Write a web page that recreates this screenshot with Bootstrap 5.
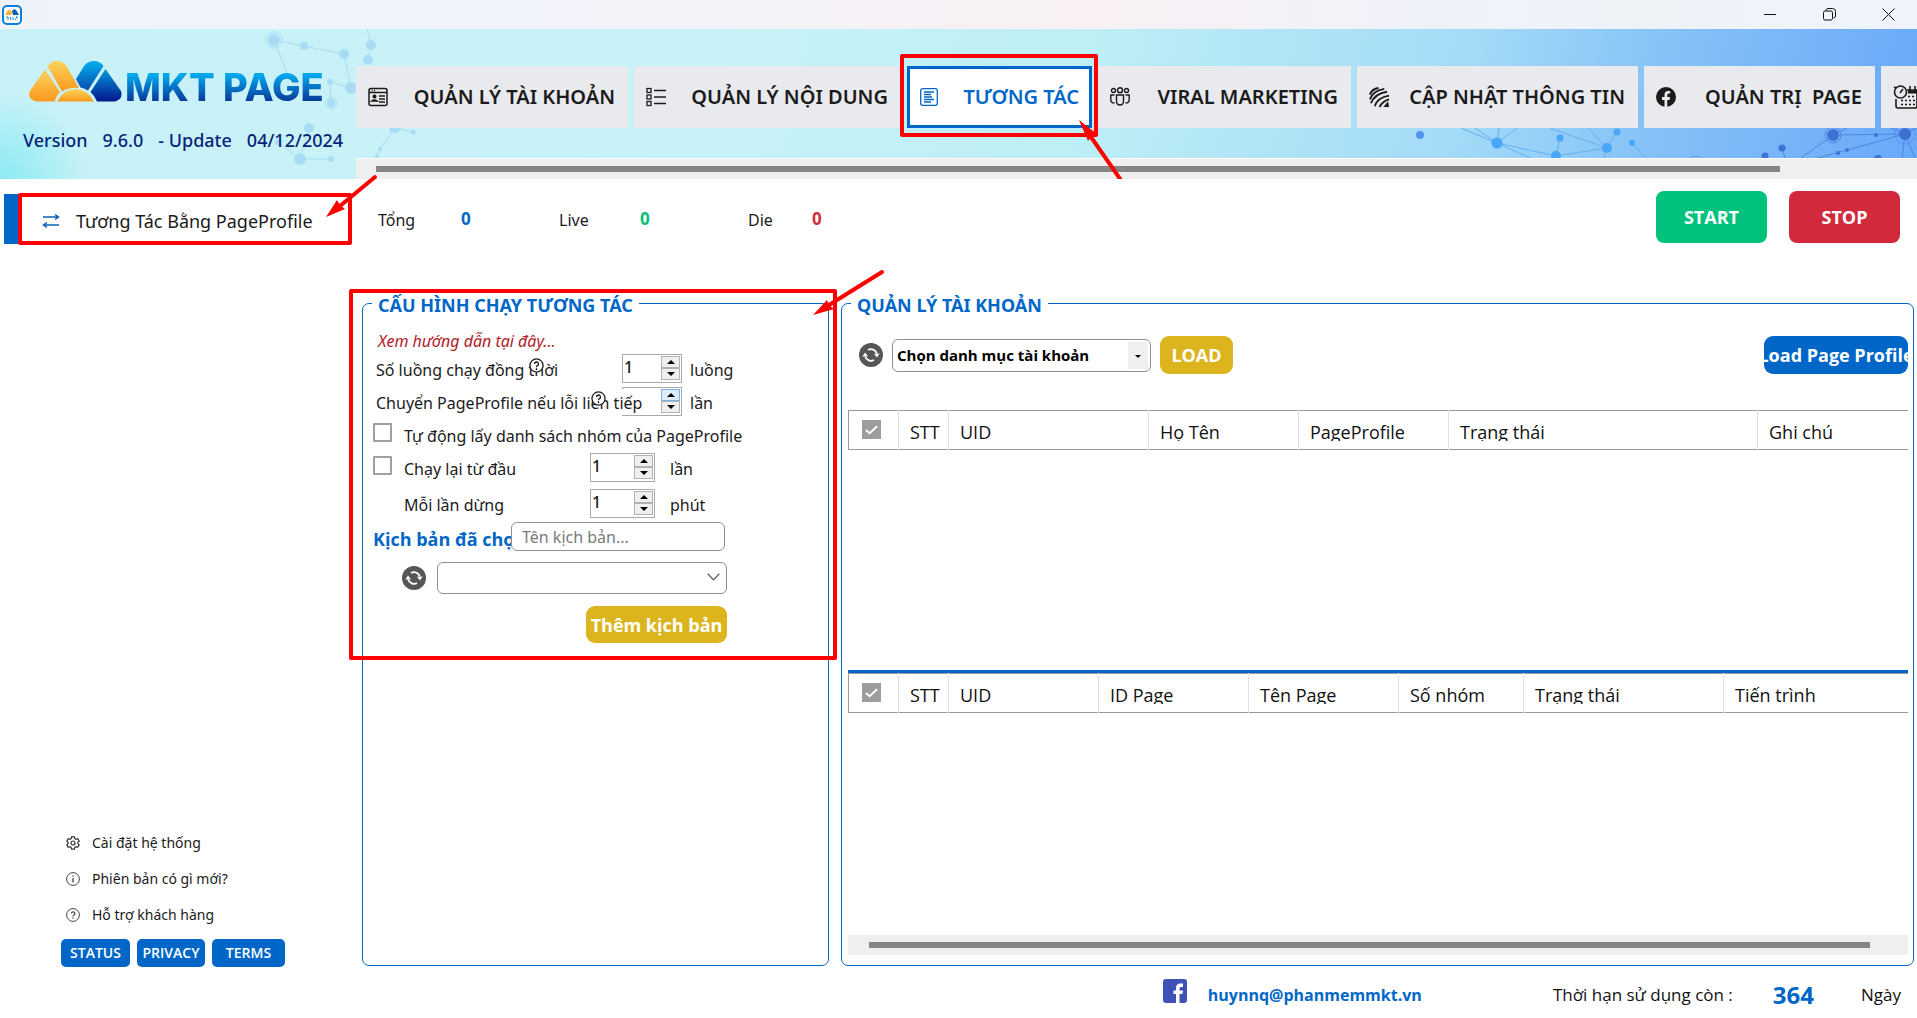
<!DOCTYPE html>
<html lang="vi">
<head>
<meta charset="utf-8">
<meta name="viewport" content="width=device-width, initial-scale=1">
<title>MKT PAGE</title>
<link rel="stylesheet" href="https://cdn.jsdelivr.net/npm/bootstrap@5.3.0/dist/css/bootstrap.min.css">
<style>
:root{--blue:#0067c8;--gold:#dcb41e;--ink:#1b1b1b}
body{font-family:"Open Sans","Noto Sans",sans-serif;font-size:16px;line-height:24px;color:var(--ink);background:#fff}
.nav-tab,.version,.side-item,.side-links,.stat,.group legend,.config-body{font-family:"Noto Sans","Open Sans",sans-serif}
a{color:inherit;text-decoration:none}
svg{display:block;flex:none}
.titlebar{height:29px;background:linear-gradient(90deg,#eef3fa 0,#f0f3fa 25%,#f8f0f4 57%,#eff2fa 76%,#eef3f8 85%,#eff3fb 100%)}
.window-controls{gap:46px;padding-right:22px}
.window-controls button,.icon-btn{border:0;background:none;padding:0;color:#111}
.app-header{height:150px;overflow:hidden;background:radial-gradient(circle at 0 100%,#8ceaf3 0,rgba(140,234,243,0) 90px),linear-gradient(102deg,#c9f2f8 0,#c5f1f7 40%,#bdeff5 56%,#a3daf7 76%,#85c1f7 86%,#68a8f8 100%)}
.network{position:absolute;top:0;height:150px}
.brand{width:356px;flex:none}
.brand-logo{padding:32px 0 0 29px;gap:3px}
.brand-name{font-family:Inter,"Open Sans",sans-serif;font-weight:800;font-size:38px;line-height:42px;padding-top:5px;white-space:nowrap;color:transparent;background:linear-gradient(#00a8ee 30%,#0a3c9c 84%);-webkit-background-clip:text;background-clip:text}
.brand-logo svg{margin-top:0}
.version{font-size:18px;font-weight:500;color:#06247a;padding:20px 0 0 23px;gap:15px}
.nav-wrap{min-width:0;padding-top:37px}
.main-nav{gap:6px;height:62px;margin-bottom:30px}
.nav-tab{flex:none;height:62px;padding:0 13px 0 12px;background:#e9eaee;font-size:20px;font-weight:600;white-space:nowrap;color:var(--ink)}
.nav-tab.active{background:#fff;border:3px solid var(--blue);color:var(--blue);padding:0 10px}
.w-a{width:272px}.w-b{width:267px}.w-c{width:185px}.w-d{width:253px}.w-e{width:281px}.w-f{width:231px}
.hbar{height:21px;background:#efefef;padding:7px 137px 0 20px;border-top:1px solid #fff}
.hbar>div,.gridbar>div{height:6px;background:#858585}
.frame{position:absolute;border:4px solid red;border-radius:2px;pointer-events:none;z-index:5}
.arrow{position:absolute;z-index:6;pointer-events:none;overflow:visible}
.sidebar{width:356px;flex:none;padding:15px 0 51px}
.side-item{margin-left:4px;height:50px;border-left:14px solid var(--blue);padding:3px 0 0 24px;gap:16px;font-size:18px}
.side-item .frame{left:0;right:4px;top:-1px;bottom:-1px}
.side-links{padding-left:66px;gap:12px;font-size:14px}
.side-links a{gap:12px}
.side-btns{padding:12px 0 0 61px;gap:7px}
.side-btns button{height:28px;border:0;border-radius:5px;background:var(--blue);color:#fff;font-size:14px;font-weight:600;padding:0}
.stats{height:112px;padding:12px 17px 0 22px;font-size:16px}
.stat{padding-top:17px}
.stat b{font-size:17px;line-height:22px}
.run-btn{width:111px;height:52px;border:0;border-radius:8px;color:#fff;font-weight:700;font-size:18px}
.bg-go{background:#00c27d}.bg-halt{background:#d22a3c}
.panels{padding:0 3px 0 6px;gap:12px}
.group{border:1px solid var(--blue);border-radius:7px;min-width:0;margin:0;padding:0}
.group legend{float:none;width:auto;margin:0 0 0 9px;padding:3px 6px 0;font-size:18px;line-height:22px;font-weight:700;color:var(--blue)}
.config{width:467px;flex:none}
.config-body{padding:12px 0 0 10px}
.cfg-row{height:29px;margin-bottom:4px}
.cfg-row label,.cfg-row>span{padding-top:2px}
.hint{height:26px;color:#b3202a;font-style:italic;padding:1px 0 0 5px}
.lbl-1{width:249px;padding-left:3px}
.over{background:#fff;width:278px;margin-right:-29px;z-index:1;white-space:nowrap}
.help{position:absolute;top:4px;z-index:2;background:transparent;border:0;padding:0}
.spin{height:29px;border:1px solid #aaa;background:#fff;padding:1px}
.spin-s{width:60px}.spin-l{width:65px}
.spin input{flex:1;min-width:0;width:0;border:0;outline:0;padding:0 0 3px 0;font-size:16px;font-weight:500;appearance:textfield;-moz-appearance:textfield;color:var(--ink)}
.spin input::-webkit-inner-spin-button{appearance:none;-webkit-appearance:none;display:none}
.spin button{width:19px;height:12px;border:1px solid #b2b2b2;background:#efefef;padding:0;display:flex;align-items:center;justify-content:center}
.spin button.hot{background:#dcecfb;border-color:#7eb0e6}
.box{appearance:none;-webkit-appearance:none;width:19px;height:19px;border:2px solid #a0a0a0;border-radius:1px;margin:3px 12px 0 0;align-self:flex-start;flex:none;background:#fff}
.scenario-label{width:138px;overflow:hidden;white-space:nowrap;color:var(--blue);font-family:"Open Sans",sans-serif;font-weight:700;font-size:18px}
.field{border:1px solid #8f8f8f;border-radius:6px;background:#fff;height:29px}
.scenario-input{width:214px;padding:0 10px}
.scenario-input::placeholder{color:#7b7b7b;opacity:1}
.pick select{appearance:none;-webkit-appearance:none;width:100%}
.pick svg{position:absolute;pointer-events:none}
.pick-a{width:290px}.pick-a select{height:32px}.pick-a svg{right:7px;top:11px}
.pick-b{width:259px}.pick-b select{height:33px;padding:0 4px;font-size:15px;font-weight:700;color:#000}
.pick-b .drop{position:absolute;right:3px;top:3px;width:20px;height:27px;background:#efefef;pointer-events:none}
.pick-b svg{left:7px;top:13px}
.gold{background:var(--gold);color:#fff;border:0;border-radius:9px;font-weight:700;font-size:18px;padding:0;white-space:nowrap}
.add{width:141px;height:37px;margin:12px 0 0 213px;font-family:"Open Sans",sans-serif}
.load{width:73px;height:38px;margin-left:9px}
.load-profile{width:144px;height:38px;background:var(--blue);color:#fff;border:0;border-radius:9px;font-weight:700;font-size:18px;padding:0;overflow:hidden;white-space:nowrap}
.accounts{padding:0 5px 10px 6px}
.accounts legend{margin-left:3px}
.toolbar{padding:20px 0 36px 11px}
.pane-a{flex:87 1 0}.pane-b{flex:88 1 0;border-top:3px solid var(--blue)}
.sheet{table-layout:fixed;width:100%;border:1px solid #999;border-right:0}
.sheet thead th{height:39px;border:0;border-left:1px solid #e2e2e2;padding:9px 0 0 11px;font-weight:400;font-size:18px;color:#111;vertical-align:top}
.sheet thead th:first-child{border-left:0;padding-left:13px}
.sheet span{display:block;height:21px;line-height:24px;overflow:hidden;white-space:nowrap}
.tick{appearance:none;-webkit-appearance:none;display:block;width:19px;height:19px;margin:0;background:#9d9d9d}
.tick-svg{position:absolute;left:3px;top:5px;pointer-events:none}
.gridbar{height:20px;background:#efefef;padding:7px 38px 0 21px}
.footer-bar{height:52px;padding:0 16px 2px;font-size:17px;color:#111}
.footer-bar span,.footer-bar a{padding-top:7px}
.footer-bar .days{font-size:24px;font-weight:700;color:var(--blue);margin:0 47px 0 40px}
.mail{margin:0 131px 0 21px;color:var(--blue);font-weight:700;font-size:16px}
</style>
<script src="https://cdn.jsdelivr.net/npm/bootstrap@5.3.0/dist/js/bootstrap.bundle.min.js"></script>
</head>
<body class="d-flex flex-column min-vh-100 overflow-x-hidden">
<svg width="0" height="0" class="position-absolute" aria-hidden="true">
  <defs>
    <linearGradient id="or" x1="0" y1="0" x2="0" y2="1"><stop offset="0" stop-color="#fbd35c"/><stop offset="1" stop-color="#fb9a1e"/></linearGradient>
    <linearGradient id="bl" x1="0" y1="0" x2="0" y2="1"><stop offset="0" stop-color="#00b0f0"/><stop offset="1" stop-color="#0a4bae"/></linearGradient>
    <linearGradient id="nb" x1="0" y1="0" x2="0" y2="1"><stop offset="0" stop-color="#009be0"/><stop offset="1" stop-color="#04158a"/></linearGradient>
    <symbol id="refresh" viewBox="0 0 24 24"><circle cx="12" cy="12" r="12" fill="#565656"/><g fill="none" stroke="#fff" stroke-width="1.8"><path d="M6.2 13.5A6 6 0 0 0 15 17"/><path d="M17.8 10.5A6 6 0 0 0 9 7"/></g><path d="M3.4 13.6 6 9.6 9 13.2zM20.600 10.400 18 14.400 15 10.800z" fill="#fff"/></symbol>
    <symbol id="ask" viewBox="0 0 16 16"><circle cx="8" cy="8" r="7" fill="#fff" stroke="#1b1b1b" stroke-width="1.400"/><path d="M5.900 6.400A2.100 2.100 0 1 1 8.800 8.300Q8 8.700 8 9.800" fill="none" stroke="#1b1b1b" stroke-width="1.400"/><circle cx="8" cy="11.900" r=".9"/></symbol>
    <symbol id="up" viewBox="0 0 8 4"><path d="M0 4 4 0 8 4z"/></symbol>
    <symbol id="down" viewBox="0 0 8 4"><path d="M0 0 4 4 8 0z"/></symbol>
    <symbol id="check" viewBox="0 0 14 10"><path d="M1 5 5 8.500 13 1" fill="none" stroke="#fff" stroke-width="2"/></symbol>
  </defs>
</svg>

<div class="titlebar d-flex align-items-center justify-content-between">
  <svg width="22" height="20" viewBox="-2 0 22 20"><rect x="1" y="1" width="18" height="18" rx="4" fill="#fff" stroke="#0b7fe0" stroke-width="2"/><path d="M3 10 6 5Q7.500 4 9 6L10.500 8.500 8 10z" fill="#f8b136"/><path d="M10 6Q12 3 14 5L17 10H11z" fill="#0b5fb4"/><path d="M4 12h2v3M8 12l1 3M11 12v3M14 12h2M13 15l2-3" stroke="#1683d8" fill="none"/></svg>
  <div class="window-controls d-flex">
    <button type="button" aria-label="Minimize"><svg width="13" height="13" viewBox="0 0 13 13"><path d="M0 6.500h12" stroke="currentColor"/></svg></button>
    <button type="button" aria-label="Restore"><svg width="13" height="13" viewBox="0 0 13 13" fill="none" stroke="currentColor"><rect x=".5" y="3" width="9" height="9" rx="1.500"/><path d="M3 2.500Q3.200.500 5 .5h4.500q3 0 3 3V8q0 1.500-2 2"/></svg></button>
    <button type="button" aria-label="Close"><svg width="13" height="13" viewBox="0 0 13 13"><path d="m.5.500 12 12m0-12-12 12" stroke="currentColor"/></svg></button>
  </div>
</div>

<header class="app-header d-flex position-relative">
  <svg class="network start-0" width="420" viewBox="0 29 420 150" fill="#a8dcf4" stroke="#a8dcf4" aria-hidden="true">
    <path d="M290 80 274 40 304 46 344 54 351 88 330 82 331 103M367 29l4 16-3 15M309 128l-9 31M278 142l22 17h31M395 128l-15 21-3 7M395 128l18 4" fill="none"/>
    <g stroke="none"><circle cx="274" cy="40" r="6"/><circle cx="304" cy="46" r="4"/><circle cx="344" cy="54" r="5"/><circle cx="371" cy="45" r="5"/><circle cx="368" cy="60" r="5"/><circle cx="330" cy="82" r="3"/><circle cx="351" cy="88" r="6"/><circle cx="331" cy="103" r="4"/><circle cx="309" cy="128" r="5"/><circle cx="278" cy="142" r="3"/><circle cx="300" cy="159" r="6"/><circle cx="331" cy="159" r="3"/><circle cx="395" cy="127" r="6"/><circle cx="413" cy="132" r="2.500"/><circle cx="380" cy="149" r="2"/><circle cx="377" cy="156" r="2"/></g>
    <circle cx="274" cy="40" r="8" fill="none"/><circle cx="331" cy="103" r="5.500" fill="none"/>
  </svg>
  <svg class="network end-0" width="517" viewBox="1400 29 517 150" aria-hidden="true">
    <g fill="none" stroke="#62b2f3"><path d="m1461 128 36 15-22-15m24 0-2 15 20-15m-20 15 33 15m-33-15 59 13 51-8 10-17m-61 25 4-18m47 10-57-20m57 20-19-20m19 20-4 12m29-17 14 15"/></g>
    <g fill="#47a6f7"><circle cx="1420" cy="135" r="4" fill="#5593f0"/><circle cx="1497" cy="143" r="5.500"/><circle cx="1556" cy="156" r="5"/><circle cx="1560" cy="138" r="3.500"/><circle cx="1607" cy="148" r="5"/><circle cx="1617" cy="132" r="3.500"/><circle cx="1632" cy="143" r="3"/></g>
    <g fill="none" stroke="#4d86e4"><path d="m1801 158 32-23 72-1-87 24m87-24-3 24m3-24 10 24M1833 135l14-7m58 6-14-6m14 6 12-6m-135 20 3 10"/><circle cx="1833" cy="135" r="8"/><circle cx="1905" cy="134" r="10" stroke-dasharray="2 2"/><circle cx="1696" cy="166" r="10" stroke-dasharray="2 2"/></g>
    <g fill="#3f70d4"><circle cx="1765" cy="156" r="3.500"/><circle cx="1782" cy="148" r="3.500"/><circle cx="1833" cy="135" r="6"/><circle cx="1905" cy="134" r="6"/><circle cx="1847" cy="150" r="2"/><circle cx="1838" cy="153" r="2"/><circle cx="1876" cy="135" r="2"/><circle cx="1878" cy="159" r="4"/></g>
  </svg>
  <div class="brand position-relative">
    <div class="brand-logo d-flex align-items-start">
      <svg width="93" height="41" viewBox="0 0 93 41">
        <path d="M16 8.500 31 31Q27 35 25.500 40.500H7Q-2 38 .8 30z" fill="url(#or)"/>
        <path d="M18.500 5.500Q22 0 27.500 0 34 0 37.500 5L50 27Q40 26 33 30.500z" fill="url(#or)"/>
        <path d="M28 40.500Q35 28 46.500 28T65 40.500z" fill="url(#or)"/>
        <path d="M47 18 55 5Q59 0 65 0 71 0 74.500 5L59 29.500Q55 27 51.500 26.500z" fill="url(#bl)"/>
        <path d="M76.500 8 92 30Q94.500 38 86 40.500H68Q66 35 61.500 31z" fill="url(#nb)"/>
      </svg>
      <div class="brand-name">MKT PAGE</div>
    </div>
    <div class="version d-flex"><span>Version</span><span>9.6.0</span><span>- Update</span><span>04/12/2024</span></div>
  </div>
  <div class="nav-wrap flex-grow-1 position-relative">
    <nav class="main-nav d-flex">
      <a href="#" class="nav-tab w-a d-flex align-items-center justify-content-between">
        <svg width="20" height="20" viewBox="0 0 20 20" fill="none" stroke="currentColor" stroke-width="1.500"><rect x="1" y="1.500" width="18" height="17" rx="2"/><path d="M1 5.500h18M11 9h6M11 12h6M11 15h6M3.500 3.500h1M6 3.500h1"/><circle cx="6.500" cy="9.500" r="1.300" fill="currentColor"/><path d="M3.800 14q2.700-2 5.400 0z" fill="currentColor"/></svg>
        <span>QUẢN LÝ TÀI KHOẢN</span></a>
      <a href="#" class="nav-tab w-b d-flex align-items-center justify-content-between">
        <svg width="20" height="20" viewBox="0 0 20 20" fill="none" stroke="currentColor" stroke-width="1.300"><rect x="1" y="1.500" width="4" height="4"/><rect x="1" y="8" width="4" height="4"/><rect x="1" y="14.500" width="4" height="4"/><path d="M8 3.500h12M8 10h12M8 16.500h12"/></svg>
        <span>QUẢN LÝ NỘI DUNG</span></a>
      <a href="#" class="nav-tab w-c active position-relative d-flex align-items-center justify-content-between">
        <svg width="18" height="18" viewBox="0 0 18 18" fill="none" stroke="currentColor" stroke-width="1.300"><rect x=".7" y=".7" width="16.600" height="16.600" rx="2"/><path d="M4 4h10M4 6.500h7M4 9h8M4 11.500h10M4 14h7"/></svg>
        <span>TƯƠNG TÁC</span>
        <i class="frame" style="inset:-15px -9px -12px -10px"></i>
        <svg class="arrow" style="left:169px;top:50px" width="50" height="70" viewBox="0 0 50 70"><path d="M12 18 46 67" stroke="red" stroke-width="4" stroke-linecap="round"/><path d="M0 1 18 15 14 16 9 22z" fill="red"/></svg>
      </a>
      <a href="#" class="nav-tab w-d d-flex align-items-center justify-content-between">
        <svg width="20" height="20" viewBox="0 0 20 20" fill="none" stroke="currentColor" stroke-width="1.400"><circle cx="3.500" cy="3.500" r="2"/><circle cx="10" cy="3.200" r="2.500"/><circle cx="16.500" cy="3.500" r="2"/><path d="M6.500 8h7v6q0 4-3.500 4t-3.500-4zM4.500 8H.8v5q0 3 3.700 3M15.500 8h3.700v5q0 3-3.700 3"/></svg>
        <span>VIRAL MARKETING</span></a>
      <a href="#" class="nav-tab w-e d-flex align-items-center justify-content-between">
        <svg width="21" height="21" viewBox="0 0 22 22" fill="none" stroke="currentColor" stroke-width="2"><path d="M1 8Q3 2 10 1M1 13Q4 4 16 2M2 17Q6 7 19 5M6 20Q9 11 21 9M11 21Q14 15 21 13"/><path d="m15 21 5-6 1 6z" fill="currentColor" stroke="none"/></svg>
        <span>CẬP NHẬT THÔNG TIN</span></a>
      <a href="#" class="nav-tab w-f d-flex align-items-center justify-content-between">
        <svg width="20" height="20" viewBox="0 0 20 20"><circle cx="10" cy="10" r="10" fill="currentColor"/><path d="M8.500 20v-7H6v-3h2.500V8q0-4 3.700-4h2v2.600h-1.500q-1.400 0-1.400 1.400v2h2.800l-.5 3h-2.300v7z" fill="#e9eaee"/></svg>
        <span>QUẢN TRỊ&nbsp; PAGE</span></a>
      <a href="#" class="nav-tab d-flex align-items-center" aria-label="Lịch">
        <svg width="26" height="26" viewBox="0 0 26 26" fill="none" stroke="currentColor" stroke-width="1.600"><path d="M3 15v7q0 2 2 2h17q2 0 2-2V6H14"/><circle cx="7.500" cy="8" r="6"/><path d="M7 9l3-4M17 2v5M22 2v5M1 3l2 1"/><path d="M15 8h9" stroke-width="3"/><path d="M8 16.500h14M8 20.500h14M15 12.500h7" stroke-dasharray="2 2"/></svg></a>
    </nav>
    <div class="hbar"><div></div></div>
  </div>
</header>

<div class="d-flex flex-grow-1">
  <aside class="sidebar d-flex flex-column">
    <a href="#" class="side-item d-flex align-items-center position-relative">
      <svg width="18" height="16" viewBox="0 0 18 16" fill="none" stroke="#0b62b4" stroke-width="1.500"><path d="M1 4h15M13 1.500 16.500 4 13 6.500M17 12H2M5 9.500 1.500 12 5 14.500"/></svg>
      <span>Tương Tác Bằng PageProfile</span>
      <i class="frame"></i>
      <svg class="arrow" style="left:308px;top:-19px" width="52" height="44" viewBox="0 0 52 44"><path d="M14 31 49 2" stroke="red" stroke-width="4" stroke-linecap="round"/><path d="M0 42 11 25 14 30 19 34z" fill="red"/></svg>
    </a>
    <div class="side-links d-flex flex-column mt-auto">
      <a href="#" class="d-flex align-items-center"><svg width="14" height="14" viewBox="0 0 14 14" fill="none" stroke="#333" stroke-width="1.200"><path d="M5.600.800h2.800l.4 1.800 1.300.700 1.700-.600 1.400 2.400-1.300 1.200v1.400l1.300 1.200-1.400 2.400-1.700-.600-1.300.700-.4 1.800H5.600l-.4-1.800-1.300-.700-1.700.600L.8 8.900l1.300-1.200V6.300L.8 5.100l1.400-2.400 1.700.600 1.300-.700z"/><circle cx="7" cy="7" r="2"/></svg>Cài đặt hệ thống</a>
      <a href="#" class="d-flex align-items-center"><svg width="14" height="14" viewBox="0 0 14 14" fill="none" stroke="#444"><circle cx="7" cy="7" r="6.400"/><path d="M7 6v4.500M7 3.500v1.200" stroke-width="1.300"/></svg>Phiên bản có gì mới?</a>
      <a href="#" class="d-flex align-items-center"><svg width="14" height="14" viewBox="0 0 14 14" fill="none" stroke="#444"><circle cx="7" cy="7" r="6.400"/><path d="M5.300 5.500A1.800 1.800 0 1 1 7.700 7.300Q7 7.600 7 8.500M7 9.600v1.200" stroke-width="1.200"/></svg>Hỗ trợ khách hàng</a>
    </div>
    <div class="side-btns d-flex">
      <button type="button" style="width:69px">STATUS</button><button type="button" style="width:68px">PRIVACY</button><button type="button" style="width:73px">TERMS</button>
    </div>
  </aside>

  <main class="flex-grow-1 d-flex flex-column" style="min-width:0">
    <div class="stats d-flex align-items-start">
      <div class="stat d-flex" style="width:181px"><span style="width:83px">Tổng</span><b style="color:#0067c8">0</b></div>
      <div class="stat d-flex" style="width:189px"><span style="width:81px">Live</span><b style="color:#00c27d">0</b></div>
      <div class="stat d-flex"><span style="width:64px">Die</span><b style="color:#d22a3c">0</b></div>
      <button type="button" class="run-btn bg-go ms-auto">START</button>
      <button type="button" class="run-btn bg-halt" style="margin-left:22px">STOP</button>
    </div>

    <div class="panels d-flex flex-grow-1">
      <fieldset class="group config position-relative">
        <legend>CẤU HÌNH CHẠY TƯƠNG TÁC</legend>
        <i class="frame" style="left:-14px;top:-27px;width:488px;height:371px"></i>
        <svg class="arrow" style="left:450px;top:-46px" width="72" height="46" viewBox="0 0 72 46"><path d="M16 35 69 2" stroke="red" stroke-width="4" stroke-linecap="round"/><path d="M0 45 14 30 16 35 21 39z" fill="red"/></svg>
        <div class="config-body">
          <div class="hint"><a href="#">Xem hướng dẫn tại đây...</a></div>
          <div class="cfg-row d-flex align-items-center position-relative">
            <label class="lbl-1" for="threads">Số luồng chạy đồng thời</label>
            <button type="button" class="help" style="left:156px" aria-label="Trợ giúp"><svg width="15" height="15"><use href="#ask"/></svg></button>
            <div class="spin spin-s d-flex"><input id="threads" type="number" value="1"><div><button type="button" aria-label="Tăng"><svg width="8" height="4"><use href="#up"/></svg></button><button type="button" aria-label="Giảm"><svg width="8" height="4"><use href="#down"/></svg></button></div></div>
            <span class="ms-2">luồng</span>
          </div>
          <div class="cfg-row d-flex align-items-center position-relative">
            <label class="lbl-1 over position-relative" for="errors">Chuyển PageProfile nếu lỗi liên tiếp</label>
            <button type="button" class="help" style="left:218px" aria-label="Trợ giúp"><svg width="15" height="15"><use href="#ask"/></svg></button>
            <div class="spin spin-s d-flex"><input id="errors" type="number" value=""><div><button type="button" class="hot" aria-label="Tăng"><svg width="8" height="4"><use href="#up"/></svg></button><button type="button" aria-label="Giảm"><svg width="8" height="4"><use href="#down"/></svg></button></div></div>
            <span class="ms-2">lần</span>
          </div>
          <div class="cfg-row d-flex align-items-center">
            <input class="box" type="checkbox" id="auto"><label for="auto">Tự động lấy danh sách nhóm của PageProfile</label>
          </div>
          <div class="cfg-row d-flex align-items-center" style="margin-bottom:7px">
            <input class="box" type="checkbox" id="again"><label for="again" style="width:186px">Chạy lại từ đầu</label>
            <div class="spin spin-l d-flex"><input aria-label="Số lần chạy lại" type="number" value="1"><div><button type="button" aria-label="Tăng"><svg width="8" height="4"><use href="#up"/></svg></button><button type="button" aria-label="Giảm"><svg width="8" height="4"><use href="#down"/></svg></button></div></div>
            <span style="margin-left:15px">lần</span>
          </div>
          <div class="cfg-row d-flex align-items-center">
            <label for="pause" style="width:217px;padding-left:31px">Mỗi lần dừng</label>
            <div class="spin spin-l d-flex"><input id="pause" type="number" value="1"><div><button type="button" aria-label="Tăng"><svg width="8" height="4"><use href="#up"/></svg></button><button type="button" aria-label="Giảm"><svg width="8" height="4"><use href="#down"/></svg></button></div></div>
            <span style="margin-left:15px">phút</span>
          </div>
          <div class="d-flex align-items-end">
            <label class="scenario-label" for="scenario">Kịch bản đã chọn</label>
            <input id="scenario" class="field scenario-input" type="text" placeholder="Tên kịch bản...">
          </div>
          <div class="d-flex align-items-center" style="padding:11px 0 0 29px">
            <button type="button" class="icon-btn" aria-label="Tải lại"><svg width="24" height="24"><use href="#refresh"/></svg></button>
            <div class="pick pick-a position-relative" style="margin-left:11px"><select class="field d-block" aria-label="Kịch bản"><option></option></select><svg width="13" height="8" viewBox="0 0 13 8"><path d="m.700.700 5.800 6 5.800-6" fill="none" stroke="#666" stroke-width="1.400"/></svg></div>
          </div>
          <button type="button" class="gold add d-block">Thêm kịch bản</button>
        </div>
      </fieldset>

      <fieldset class="group accounts flex-grow-1 d-flex flex-column">
        <legend>QUẢN LÝ TÀI KHOẢN</legend>
        <div class="toolbar d-flex align-items-center">
          <button type="button" class="icon-btn" aria-label="Tải lại"><svg width="24" height="24"><use href="#refresh"/></svg></button>
          <div class="pick pick-b position-relative" style="margin-left:9px"><select class="field d-block" aria-label="Danh mục"><option>Chọn danh mục tài khoản</option></select><div class="drop"><svg width="6" height="3" viewBox="0 0 8 4"><use href="#down"/></svg></div></div>
          <button type="button" class="gold load">LOAD</button>
          <button type="button" class="load-profile ms-auto d-flex justify-content-center align-items-center"><span>Load Page Profile</span></button>
        </div>
        <div class="pane-a">
          <table class="sheet">
            <colgroup><col style="width:50px"><col style="width:50px"><col style="width:200px"><col style="width:150px"><col style="width:150px"><col style="width:309px"><col></colgroup>
            <thead><tr><th><div class="position-relative"><input type="checkbox" class="tick" aria-label="Chọn tất cả" checked><svg class="tick-svg" width="13" height="10"><use href="#check"/></svg></div></th><th><span>STT</span></th><th><span>UID</span></th><th><span>Họ Tên</span></th><th><span>PageProfile</span></th><th><span>Trạng thái</span></th><th><span>Ghi chú</span></th></tr></thead>
          </table>
        </div>
        <div class="pane-b">
          <table class="sheet">
            <colgroup><col style="width:50px"><col style="width:50px"><col style="width:150px"><col style="width:150px"><col style="width:150px"><col style="width:125px"><col style="width:200px"><col></colgroup>
            <thead><tr><th><div class="position-relative"><input type="checkbox" class="tick" aria-label="Chọn tất cả" checked><svg class="tick-svg" width="13" height="10"><use href="#check"/></svg></div></th><th><span>STT</span></th><th><span>UID</span></th><th><span>ID Page</span></th><th><span>Tên Page</span></th><th><span>Số nhóm</span></th><th><span>Trạng thái</span></th><th><span>Tiến trình</span></th></tr></thead>
          </table>
        </div>
        <div class="gridbar"><div></div></div>
      </fieldset>
    </div>

    <footer class="footer-bar d-flex align-items-center justify-content-end">
      <svg width="24" height="24" viewBox="0 0 24 24"><rect width="24" height="24" rx="3" fill="#3f51b5"/><path d="M13 24v-9h-2.500v-3.500H13V9q0-4.500 4.200-4.500h2.800V8h-2q-1.500 0-1.500 1.600v1.900H20l-.6 3.500h-2.900v9z" fill="#fff"/></svg>
      <a class="mail" href="#">huynnq@phanmemmkt.vn</a>
      <span>Thời hạn sử dụng còn :</span><span class="days">364</span><span>Ngày</span>
    </footer>
  </main>
</div>
</body>
</html>
